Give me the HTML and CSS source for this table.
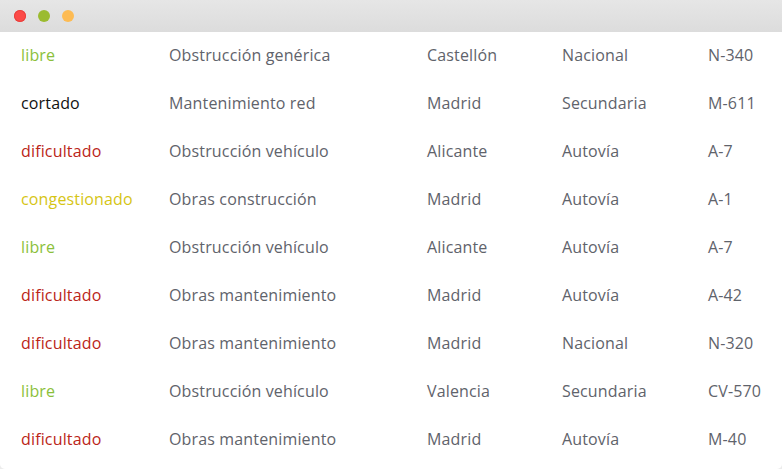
FILE: index.html
```html
<!DOCTYPE html>
<html lang="es">
<head>
<meta charset="utf-8">
<title>Estado de carreteras</title>
<link rel="stylesheet" href="styles.css">
</head>
<body>
<div class="window">
  <div class="titlebar">
    <span class="dot dot-red"></span>
    <span class="dot dot-green"></span>
    <span class="dot dot-orange"></span>
  </div>
  <table class="roads">
    <tbody>
      <tr><td class="st libre">libre</td><td>Obstrucción genérica</td><td>Castellón</td><td>Nacional</td><td>N-340</td></tr>
      <tr><td class="st cortado">cortado</td><td>Mantenimiento red</td><td>Madrid</td><td>Secundaria</td><td>M-611</td></tr>
      <tr><td class="st dificultado">dificultado</td><td>Obstrucción vehículo</td><td>Alicante</td><td>Autovía</td><td>A-7</td></tr>
      <tr><td class="st congestionado">congestionado</td><td>Obras construcción</td><td>Madrid</td><td>Autovía</td><td>A-1</td></tr>
      <tr><td class="st libre">libre</td><td>Obstrucción vehículo</td><td>Alicante</td><td>Autovía</td><td>A-7</td></tr>
      <tr><td class="st dificultado">dificultado</td><td>Obras mantenimiento</td><td>Madrid</td><td>Autovía</td><td>A-42</td></tr>
      <tr><td class="st dificultado">dificultado</td><td>Obras mantenimiento</td><td>Madrid</td><td>Nacional</td><td>N-320</td></tr>
      <tr><td class="st libre">libre</td><td>Obstrucción vehículo</td><td>Valencia</td><td>Secundaria</td><td>CV-570</td></tr>
      <tr><td class="st dificultado">dificultado</td><td>Obras mantenimiento</td><td>Madrid</td><td>Autovía</td><td>M-40</td></tr>
    </tbody>
  </table>
</div>
</body>
</html>
```
FILE: styles.css
```css
html, body {
  margin: 0;
  padding: 0;
  background: #ececec;
}
body {
  font-family: "Open Sans", "Liberation Sans", sans-serif;
  font-size: 16px;
  letter-spacing: 0.15px;
}
.window {
  width: 782px;
  height: 469px;
  background: #fff;
  border-radius: 0 0 5px 5px;
  overflow: hidden;
}
.titlebar {
  height: 32px;
  display: flex;
  align-items: center;
  gap: 12px;
  padding-left: 14px;
  padding-bottom: 1px;
  box-sizing: border-box;
  background: linear-gradient(to bottom, #e6e6e6, #dcdcdc);
}
.dot {
  width: 12px;
  height: 12px;
  border-radius: 50%;
}
.dot-red { background: #fc4a47; box-shadow: inset 0 0 0 1px #e8403d; }
.dot-green { background: #9bbb30; }
.dot-orange { background: #fdbb53; }
.roads {
  border-collapse: collapse;
  width: 100%;
  table-layout: fixed;
}
.roads td {
  height: 48px;
  padding: 0 0 2px 0;
  box-sizing: border-box;
  color: #5f636b;
  vertical-align: middle;
  white-space: nowrap;
}
.roads td:nth-child(1) { width: 169px; padding-left: 21px; }
.roads td:nth-child(2) { width: 258px; }
.roads td:nth-child(3) { width: 135px; }
.roads td:nth-child(4) { width: 146px; }
.roads td.libre { color: #8bbf3a; }
.roads td.cortado { color: #111; }
.roads td.dificultado { color: #bb2518; }
.roads td.congestionado { color: #d6c515; }
```
